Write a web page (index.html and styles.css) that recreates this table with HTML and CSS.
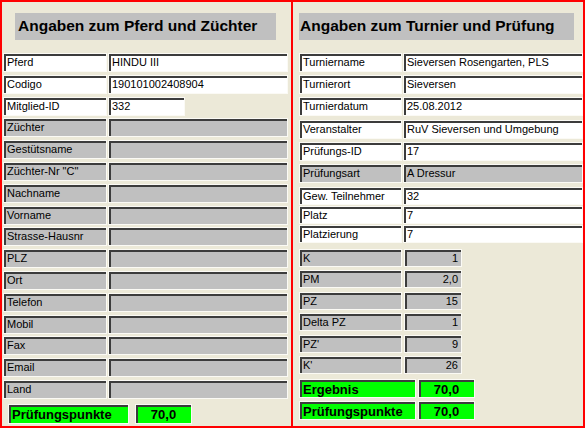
FILE: index.html
```html
<!DOCTYPE html>
<html lang="de">
<head>
<meta charset="utf-8">
<title>Angaben</title>
<link rel="stylesheet" href="styles.css">
</head>
<body>
<div class="frame">
  <section class="col col-left">
    <h2 class="head head-left">Angaben zum Pferd und Züchter</h2>
    <div class="grid grid-left">
      <div class="f">Pferd</div><div class="f">HINDU III</div>
      <div class="f">Codigo</div><div class="f">190101002408904</div>
      <div class="f">Mitglied-ID</div><div class="f short">332</div>
      <div class="f g">Züchter</div><div class="f g"></div>
      <div class="f g">Gestütsname</div><div class="f g"></div>
      <div class="f g">Züchter-Nr "C"</div><div class="f g"></div>
      <div class="f g">Nachname</div><div class="f g"></div>
      <div class="f g">Vorname</div><div class="f g"></div>
      <div class="f g">Strasse-Hausnr</div><div class="f g"></div>
      <div class="f g">PLZ</div><div class="f g"></div>
      <div class="f g">Ort</div><div class="f g"></div>
      <div class="f g">Telefon</div><div class="f g"></div>
      <div class="f g">Mobil</div><div class="f g"></div>
      <div class="f g">Fax</div><div class="f g"></div>
      <div class="f g">Email</div><div class="f g"></div>
      <div class="f g">Land</div><div class="f g"></div>
    </div>
    <div class="result result-left">
      <div class="f green">Prüfungspunkte</div><div class="f green num">70,0</div>
    </div>
  </section>
  <section class="col col-right">
    <h2 class="head head-right">Angaben zum Turnier und Prüfung</h2>
    <div class="grid grid-a">
      <div class="f">Turniername</div><div class="f">Sieversen Rosengarten, PLS</div>
      <div class="f">Turnierort</div><div class="f">Sieversen</div>
      <div class="f">Turnierdatum</div><div class="f">25.08.2012</div>
      <div class="f">Veranstalter</div><div class="f">RuV Sieversen und Umgebung</div>
      <div class="f">Prüfungs-ID</div><div class="f">17</div>
      <div class="f g">Prüfungsart</div><div class="f g">A Dressur</div>
    </div>
    <div class="grid grid-b">
      <div class="f">Gew. Teilnehmer</div><div class="f">32</div>
      <div class="f">Platz</div><div class="f">7</div>
      <div class="f">Platzierung</div><div class="f">7</div>
    </div>
    <div class="grid grid-c">
      <div class="f g">K</div><div class="f g right">1</div>
      <div class="f g">PM</div><div class="f g right">2,0</div>
      <div class="f g">PZ</div><div class="f g right">15</div>
      <div class="f g">Delta PZ</div><div class="f g right">1</div>
      <div class="f g">PZ'</div><div class="f g right">9</div>
      <div class="f g">K'</div><div class="f g right">26</div>
    </div>
    <div class="grid grid-d">
      <div class="f green">Ergebnis</div><div class="f green num">70,0</div>
      <div class="f green">Prüfungspunkte</div><div class="f green num">70,0</div>
    </div>
  </section>
</div>
</body>
</html>
```

FILE: styles.css
```css
html, body {
  margin: 0;
  padding: 0;
  background: #ffffff;
}

body {
  font-family: "Liberation Sans", Arial, sans-serif;
  color: #000;
}

.frame {
  width: 581px;
  height: 424px;
  border: 2px solid #ff0000;
  background: #ece9d8;
  display: flex;
}

.col {
  display: flex;
  flex-direction: column;
  align-items: flex-start;
}

.col-left {
  width: 289px;
  border-right: 2px solid #ff0000;
}

.col-right {
  width: 290px;
}

.head {
  margin: 11px 0 0 0;
  height: 27px;
  line-height: 25px;
  background: #c0c0c0;
  font-size: 15.5px;
  font-weight: bold;
  box-sizing: border-box;
  white-space: nowrap;
}

.head-left {
  margin-left: 13px;
  width: 261px;
  padding-left: 3px;
}

.head-right {
  margin-left: 6px;
  width: 275px;
  padding-left: 1px;
}

.grid {
  display: grid;
}

.grid-left {
  margin: 13px 0 0 1px;
  grid-template-columns: 104px 180px;
  column-gap: 1px;
  grid-auto-rows: 19px;
  row-gap: 2.8px;
}

.grid-a {
  margin: 13px 0 0 6px;
  grid-template-columns: 103px 180px;
  column-gap: 1px;
  grid-auto-rows: 19px;
  row-gap: 3.2px;
}

.grid-b {
  margin: 4px 0 0 6px;
  grid-template-columns: 103px 180px;
  column-gap: 1px;
  grid-auto-rows: 18px;
  row-gap: 1px;
}

.grid-c {
  margin: 6px 0 0 6px;
  grid-template-columns: 103px 58px;
  column-gap: 2px;
  grid-auto-rows: 18px;
  row-gap: 3.4px;
}

.grid-d {
  margin: 5px 0 0 6px;
  grid-template-columns: 117px 57px;
  column-gap: 2px;
  grid-auto-rows: 19px;
  row-gap: 3px;
}

.f {
  box-sizing: border-box;
  background: #ffffff;
  border: 1px solid #fbfaf5;
  box-shadow: inset 2px 2px 0 #3c3c3c;
  padding: 2px 3px 0 3px;
  font-size: 11px;
  line-height: 13px;
  white-space: nowrap;
  overflow: hidden;
}

.f.g {
  background: #c0c0c0;
}

.short {
  width: 77px;
}

.right {
  text-align: right;
}

.result {
  display: grid;
}

.result-left {
  margin: 5px 0 0 6px;
  grid-template-columns: 121px 57px;
  column-gap: 6px;
  grid-auto-rows: 20px;
}

.f.green {
  background: #00ff00;
  font-size: 13px;
  font-weight: bold;
  line-height: 15px;
  padding-top: 2px;
}

.f.num {
  text-align: center;
}
```
